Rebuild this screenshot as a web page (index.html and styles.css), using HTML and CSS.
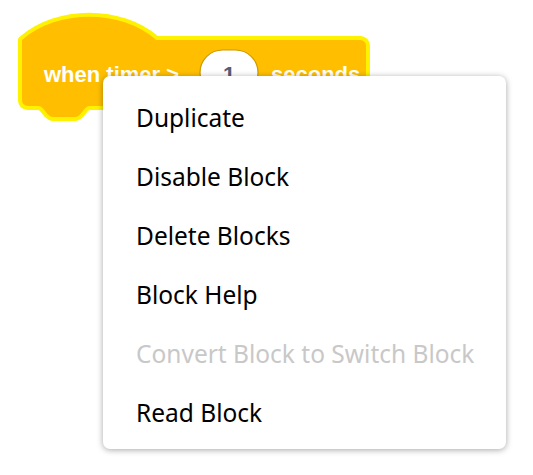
FILE: index.html
```html
<!DOCTYPE html>
<html lang="en">
<head>
<meta charset="utf-8">
<title>Block context menu</title>
<link rel="stylesheet" href="styles.css">
</head>
<body>
<div class="workspace">
  <svg class="block" width="533" height="130" viewBox="0 0 533 130" xmlns="http://www.w3.org/2000/svg">
    <path class="block-shape" d="M22,40 c35,-31 99.4,-31 134.4,0 H360.4 a5.6,5.6 0 0 1 5.6,5.6 V100.4 a5.6,5.6 0 0 1 -5.6,5.6 H90 c-3,0 -4,1.5 -5.5,3 l-4,5 c-1.5,1.5 -3,3 -5.5,3 H53 c-2.5,0 -4,-1.5 -5.5,-3 l-4,-5 c-1.5,-1.5 -2.5,-3 -5.5,-3 H27.6 a5.6,5.6 0 0 1 -5.6,-5.6 Z"/>
    <text class="label" x="44" y="82">when timer &gt;</text>
    <rect class="input" x="200" y="50" width="58" height="45" rx="22.5" ry="22.5"/>
    <text class="input-text" x="229" y="82" text-anchor="middle">1</text>
    <text class="label" x="271" y="82">seconds</text>
  </svg>
  <div class="menu">
    <div class="item">Duplicate</div>
    <div class="item">Disable Block</div>
    <div class="item">Delete Blocks</div>
    <div class="item">Block Help</div>
    <div class="item disabled">Convert Block to Switch Block</div>
    <div class="item">Read Block</div>
  </div>
</div>
</body>
</html>
```
FILE: styles.css
```css
html, body {
  margin: 0;
  padding: 0;
  background: #ffffff;
}

.workspace {
  position: relative;
  width: 533px;
  height: 475px;
  overflow: hidden;
}

.block {
  display: block;
}

.block-shape {
  fill: #FFBF00;
  stroke: #FFF200;
  stroke-width: 8;
  stroke-linejoin: round;
  paint-order: stroke;
}

.label {
  fill: #ffffff;
  font-family: "Liberation Sans", Arial, sans-serif;
  font-weight: bold;
  font-size: 22px;
}

.input {
  fill: #ffffff;
  stroke: #CC9900;
  stroke-width: 1.2;
}

.input-text {
  fill: #575E75;
  font-family: "Liberation Sans", Arial, sans-serif;
  font-weight: bold;
  font-size: 22px;
}

.menu {
  position: absolute;
  left: 103px;
  top: 76px;
  width: 403px;
  height: 373px;
  box-sizing: border-box;
  padding: 12px 0 8px;
  background: #ffffff;
  border-radius: 7px;
  box-shadow: 0 1px 6px rgba(0, 0, 0, 0.35);
  font-family: "Noto Sans", "Open Sans", sans-serif;
  font-size: 24.5px;
  color: #000000;
}

.item {
  height: 59px;
  line-height: 59px;
  padding-left: 33px;
  white-space: nowrap;
}

.item.disabled {
  color: #C8C8C8;
}
```
